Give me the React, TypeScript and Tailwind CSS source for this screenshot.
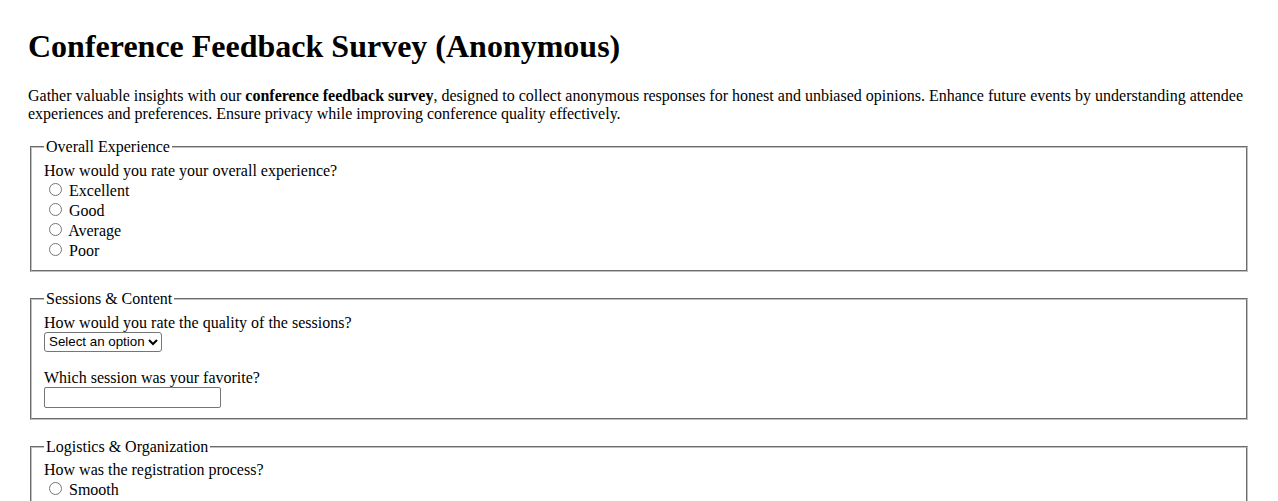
import React from 'react';

type RadioGroupProps = {
  name: string;
  question: string;
  options: string[];
};

function RadioGroup({ name, question, options }: RadioGroupProps) {
  return (
    <div>
      <div>{question}</div>
      {options.map((opt) => (
        <div key={opt}>
          <label>
            <input type="radio" name={name} value={opt} className="m-[3px_3px_0_5px]" /> {opt}
          </label>
        </div>
      ))}
    </div>
  );
}

function Section({ title, children }: { title: string; children: React.ReactNode }) {
  return (
    <fieldset className="mx-[2px] mb-[18px] border-2 [border-style:groove] border-[#c0c0c0] px-[12px] pt-[5.6px] pb-[10px] min-w-0">
      <legend className="px-[2px]">{title}</legend>
      {children}
    </fieldset>
  );
}

export default function App() {
  return (
    <div className="min-h-screen bg-white px-[28px] pt-[28px] pb-[28px] text-black text-[16px] leading-[normal] font-['Liberation_Serif','Times_New_Roman',serif]">
      <h1 className="text-[32px] font-bold leading-[normal] mb-[22.4px]">
        Conference Feedback Survey (Anonymous)
      </h1>
      <p className="mb-[15px]">
        Gather valuable insights with our <strong className="font-bold">conference feedback survey</strong>, designed to
        collect anonymous responses for honest and unbiased opinions. Enhance future events by understanding attendee
        experiences and preferences. Ensure privacy while improving conference quality effectively.
      </p>

      <form>
        <Section title="Overall Experience">
          <RadioGroup
            name="overall"
            question="How would you rate your overall experience?"
            options={['Excellent', 'Good', 'Average', 'Poor']}
          />
        </Section>

        <Section title="Sessions & Content">
          <label htmlFor="quality" className="block">How would you rate the quality of the sessions?</label>
          <select
            id="quality"
            defaultValue=""
            className="block h-[20px] text-[13.333px] leading-[normal] font-['Liberation_Sans',Arial,sans-serif] border border-[#767676] rounded-[3px] bg-white"
          >
            <option value="" disabled>Select an option</option>
            <option>Excellent</option>
            <option>Good</option>
            <option>Average</option>
            <option>Poor</option>
          </select>
          <label htmlFor="favorite" className="block mt-[17px]">Which session was your favorite?</label>
          <input
            id="favorite"
            type="text"
            className="block w-[177px] h-[21px] px-[2px] py-[1px] text-[13.333px] font-['Liberation_Sans',Arial,sans-serif] border border-[#767676] rounded-[2px] bg-white"
          />
        </Section>

        <Section title="Logistics & Organization">
          <RadioGroup
            name="registration"
            question="How was the registration process?"
            options={['Smooth', 'Some issues', 'Difficult']}
          />
        </Section>
      </form>
    </div>
  );
}
